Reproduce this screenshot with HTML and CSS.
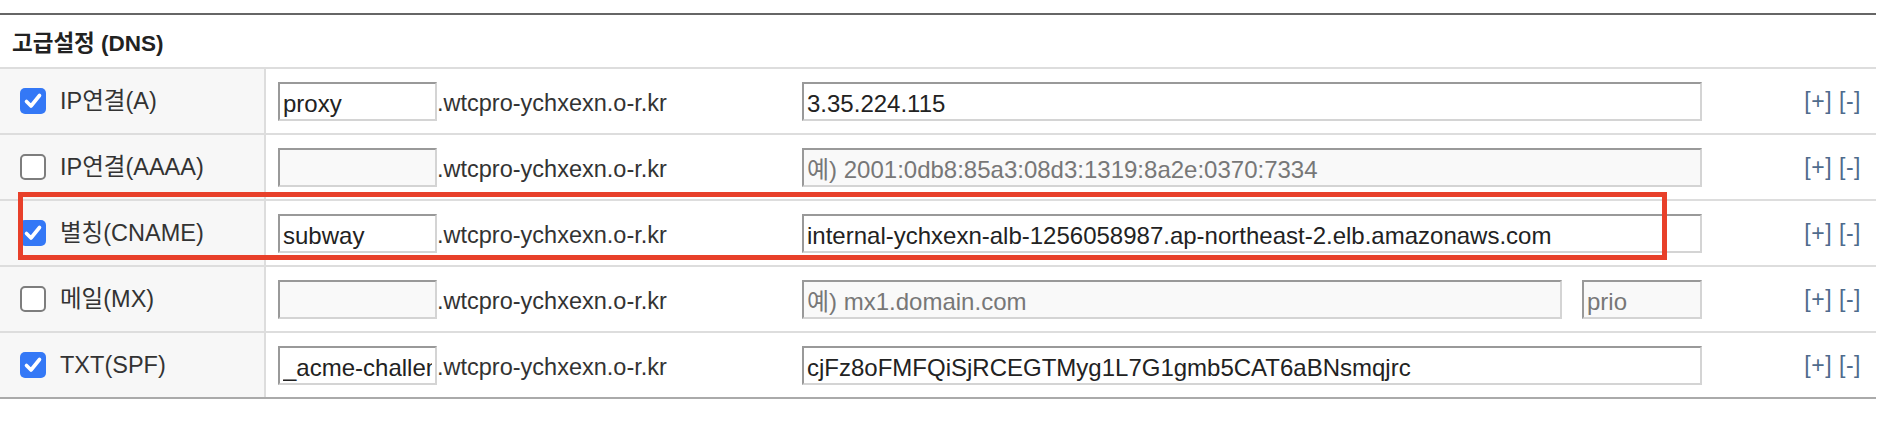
FILE: index.html
```html
<!DOCTYPE html>
<html lang="ko">
<head>
<meta charset="utf-8">
<title>고급설정 (DNS)</title>
<link rel="stylesheet" href="styles.css">
</head>
<body>
<div class="panel">
  <div class="dns-table">
    <div class="dns-head">고급설정 (DNS)</div>

    <div class="dns-row">
      <div class="cell-label">
        <span class="cb checked"><svg viewBox="0 0 26 26" width="26" height="26"><path d="M6.5 13.5 L11 18 L19.5 7.5" fill="none" stroke="#fff" stroke-width="3.6" stroke-linecap="round" stroke-linejoin="round"/></svg></span>
        <span class="label-text">IP연결(A)</span>
      </div>
      <div class="cell-host">
        <input class="in in-host" type="text" value="proxy">
        <span class="domain">.wtcpro-ychxexn.o-r.kr</span>
      </div>
      <div class="cell-value">
        <input class="in in-value" type="text" value="3.35.224.115">
      </div>
      <div class="cell-actions"><a class="act">[+]</a><a class="act">[-]</a></div>
    </div>

    <div class="dns-row">
      <div class="cell-label">
        <span class="cb"></span>
        <span class="label-text">IP연결(AAAA)</span>
      </div>
      <div class="cell-host">
        <input class="in in-host off" type="text" value="">
        <span class="domain">.wtcpro-ychxexn.o-r.kr</span>
      </div>
      <div class="cell-value">
        <input class="in in-value off" type="text" placeholder="예) 2001:0db8:85a3:08d3:1319:8a2e:0370:7334">
      </div>
      <div class="cell-actions"><a class="act">[+]</a><a class="act">[-]</a></div>
    </div>

    <div class="dns-row">
      <div class="cell-label">
        <span class="cb checked"><svg viewBox="0 0 26 26" width="26" height="26"><path d="M6.5 13.5 L11 18 L19.5 7.5" fill="none" stroke="#fff" stroke-width="3.6" stroke-linecap="round" stroke-linejoin="round"/></svg></span>
        <span class="label-text">별칭(CNAME)</span>
      </div>
      <div class="cell-host">
        <input class="in in-host" type="text" value="subway">
        <span class="domain">.wtcpro-ychxexn.o-r.kr</span>
      </div>
      <div class="cell-value">
        <input class="in in-value" type="text" value="internal-ychxexn-alb-1256058987.ap-northeast-2.elb.amazonaws.com">
      </div>
      <div class="cell-actions"><a class="act">[+]</a><a class="act">[-]</a></div>
    </div>

    <div class="dns-row">
      <div class="cell-label">
        <span class="cb"></span>
        <span class="label-text">메일(MX)</span>
      </div>
      <div class="cell-host">
        <input class="in in-host off" type="text" value="">
        <span class="domain">.wtcpro-ychxexn.o-r.kr</span>
      </div>
      <div class="cell-value mx">
        <input class="in in-mx off" type="text" placeholder="예) mx1.domain.com">
        <input class="in in-prio off" type="text" placeholder="prio">
      </div>
      <div class="cell-actions"><a class="act">[+]</a><a class="act">[-]</a></div>
    </div>

    <div class="dns-row last">
      <div class="cell-label">
        <span class="cb checked"><svg viewBox="0 0 26 26" width="26" height="26"><path d="M6.5 13.5 L11 18 L19.5 7.5" fill="none" stroke="#fff" stroke-width="3.6" stroke-linecap="round" stroke-linejoin="round"/></svg></span>
        <span class="label-text">TXT(SPF)</span>
      </div>
      <div class="cell-host">
        <input class="in in-host" type="text" value="_acme-challenge">
        <span class="domain">.wtcpro-ychxexn.o-r.kr</span>
      </div>
      <div class="cell-value">
        <input class="in in-value" type="text" value="cjFz8oFMFQiSjRCEGTMyg1L7G1gmb5CAT6aBNsmqjrc">
      </div>
      <div class="cell-actions"><a class="act">[+]</a><a class="act">[-]</a></div>
    </div>

    <div class="highlight"></div>
  </div>
</div>
</body>
</html>
```

FILE: styles.css
```css
html, body {
  margin: 0;
  padding: 0;
  background: #ffffff;
}

body {
  font-family: "Liberation Sans", "Noto Sans CJK KR", sans-serif;
  color: #333333;
}

.panel {
  padding-top: 13px;
  width: 1876px;
}

.dns-table {
  position: relative;
  border-top: 2px solid #666666;
}

.dns-head {
  height: 54px;
  box-sizing: border-box;
  padding-left: 12px;
  display: flex;
  align-items: center;
  font-size: 22.5px;
  font-weight: bold;
  color: #222222;
  border-bottom: 2px solid #dddddd;
}

.dns-row {
  display: grid;
  grid-template-columns: 266px 536px 900px 1fr;
  height: 66px;
  box-sizing: border-box;
  border-bottom: 2px solid #dddddd;
}

.dns-row.last {
  border-bottom-color: #aaaaaa;
}

.cell-label {
  background: #f7f7f7;
  border-right: 2px solid #dddddd;
  display: flex;
  align-items: center;
  gap: 14px;
  padding-left: 20px;
  font-size: 23.5px;
  color: #333333;
}

.label-text {
  line-height: 28px;
}

.cb {
  width: 26px;
  height: 26px;
  box-sizing: border-box;
  border-radius: 5px;
  border: 2px solid #7d7d7d;
  background: #ffffff;
  display: inline-flex;
  align-items: center;
  justify-content: center;
  flex: none;
}

.cb.checked {
  border: none;
  background: #3478f6;
}

.cb svg {
  display: block;
}

.cell-host {
  display: flex;
  align-items: center;
  padding-left: 12px;
}

.domain {
  font-size: 23.5px;
  color: #333333;
  line-height: 28px;
  padding-top: 4px;
}

.cell-value {
  display: flex;
  align-items: center;
}

.cell-value.mx {
  gap: 20px;
}

.in {
  height: 39px;
  box-sizing: border-box;
  margin: 0;
  padding: 6px 3px 0 3px;
  font-family: "Liberation Sans", "Noto Sans CJK KR", sans-serif;
  font-size: 24px;
  color: #222222;
  background: #ffffff;
  border-top: 2px solid #999999;
  border-left: 2px solid #999999;
  border-right: 2px solid #d4d4d4;
  border-bottom: 2px solid #d4d4d4;
  border-radius: 0;
  outline: none;
}

.in.off {
  background: #f9f9f9;
}

.in::placeholder {
  color: #777777;
  opacity: 1;
}

.in-host {
  width: 159px;
}

.in-value {
  width: 900px;
}

.in-mx {
  width: 760px;
}

.in-prio {
  width: 120px;
}

.cell-actions {
  display: flex;
  align-items: center;
  justify-content: flex-end;
  gap: 7px;
  padding-right: 15px;
}

.act {
  font-size: 23px;
  color: #4f6b8c;
  letter-spacing: 0.5px;
  cursor: pointer;
}

.highlight {
  position: absolute;
  left: 18px;
  top: 177px;
  width: 1649px;
  height: 68px;
  box-sizing: border-box;
  border: 5px solid #e8402a;
  pointer-events: none;
}
```
